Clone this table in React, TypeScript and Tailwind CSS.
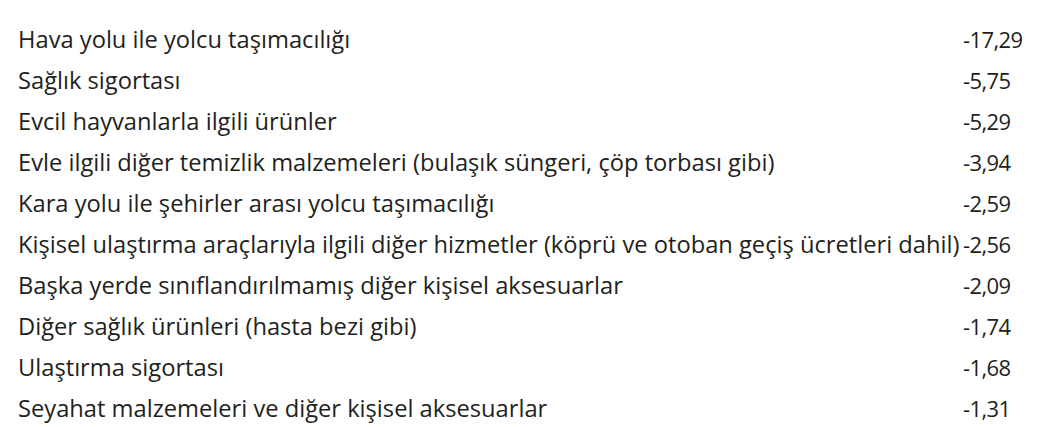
const rows: [string, string][] = [
  ["Hava yolu ile yolcu taşımacılığı", "-17,29"],
  ["Sağlık sigortası", "-5,75"],
  ["Evcil hayvanlarla ilgili ürünler", "-5,29"],
  ["Evle ilgili diğer temizlik malzemeleri (bulaşık süngeri, çöp torbası gibi)", "-3,94"],
  ["Kara yolu ile şehirler arası yolcu taşımacılığı", "-2,59"],
  ["Kişisel ulaştırma araçlarıyla ilgili diğer hizmetler (köprü ve otoban geçiş ücretleri dahil)", "-2,56"],
  ["Başka yerde sınıflandırılmamış diğer kişisel aksesuarlar", "-2,09"],
  ["Diğer sağlık ürünleri (hasta bezi gibi)", "-1,74"],
  ["Ulaştırma sigortası", "-1,68"],
  ["Seyahat malzemeleri ve diğer kişisel aksesuarlar", "-1,31"],
];

export default function App() {
  return (
    <div className="w-[1057px] h-[427px] bg-white pt-[19px] pl-[18px] font-['Open_Sans',sans-serif] text-[#231f20]">
      <div className="grid grid-cols-[945px_auto]">
        {rows.map(([label, value]) => (
          <div key={label} className="contents">
            <div className="h-[41px] leading-[41px] text-[23.7px] whitespace-nowrap">{label}</div>
            <div className="h-[41px] leading-[41px] text-[22px] tracking-[-0.6px] whitespace-nowrap">{value}</div>
          </div>
        ))}
      </div>
    </div>
  );
}
